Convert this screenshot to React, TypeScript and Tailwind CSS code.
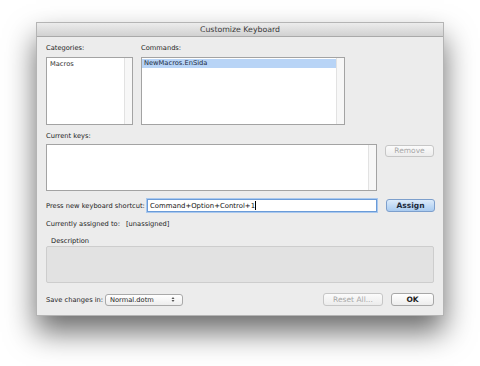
import React from "react";

const font = "font-['Lucida_Grande','DejaVu_Sans',sans-serif]";

function ListBox({className, children}: {className: string; children?: React.ReactNode}) {
    return (
        <div className={`relative flex bg-white border border-[#a3a3a3] ${className}`}>
            <div className="flex-1 pt-[1px]">{children}</div>
            <div className="w-[8px] bg-[#f7f7f7] border-l border-[#e2e2e2]"/>
        </div>
    );
}

function MacButton({label, disabled, primary, className}: {label: string; disabled?: boolean; primary?: boolean; className: string}) {
    const look = primary
        ? "border-[#7d9fcc] bg-gradient-to-b from-[#dcebfa] to-[#a9cbf0] text-[#1d2a3a] font-bold"
        : disabled
            ? "border-[#c6c6c6] bg-gradient-to-b from-[#fbfbfb] to-[#ececec] text-[#a8a8a8]"
            : "border-[#a7a7a7] bg-gradient-to-b from-[#ffffff] to-[#ededed] text-[#222]";
    return (
        <div className={`flex shrink-0 items-center justify-center whitespace-nowrap rounded-[3px] border text-[7.5px] leading-none ${look} ${className}`}>
            {label}
        </div>
    );
}

export default function App() {
    return (
        <div className={`w-[480px] h-[366px] bg-white pl-[36px] pt-[22px] ${font}`}>
            <div className="w-[408px] h-[294px] flex flex-col bg-[#ececec] border border-[#b4b4b4] shadow-[0_16px_28px_rgba(0,0,0,0.58)]">
                <div className="h-[14px] flex items-center justify-center bg-gradient-to-b from-[#ececec] to-[#d1d1d1] border-b border-[#a9a9a9] text-[7.8px] text-[#3a3a3a]">
                    Customize Keyboard
                </div>
                <div className="flex flex-col px-[9px] pt-[6px] text-[6.7px] leading-[10px] text-[#1c1c1c] whitespace-nowrap">
                    <div className="flex gap-[8px]">
                        <div className="flex flex-col w-[87px]">
                            <span>Categories:</span>
                            <ListBox className="mt-[4px] h-[68px]">
                                <div className="pl-[3px] text-[#333]">Macros</div>
                            </ListBox>
                        </div>
                        <div className="flex flex-col w-[204px]">
                            <span>Commands:</span>
                            <ListBox className="mt-[4px] h-[68px]">
                                <div className="h-[9px] bg-[#b8d4f6] pl-[2px] leading-[9px] text-[#1b2a40]">NewMacros.EnSida</div>
                            </ListBox>
                        </div>
                    </div>
                    <span className="mt-[6px]">Current keys:</span>
                    <div className="mt-[3px] flex gap-[8px]">
                        <ListBox className="w-[333px] h-[47px]"/>
                        <MacButton label="Remove" disabled className="w-[49px] h-[12px] mt-[1px]"/>
                    </div>
                    <div className="mt-[8px] flex items-center">
                        <span className="w-[101px] shrink-0">Press new keyboard shortcut:</span>
                        <div className="w-[230px] h-[13px] shrink-0 flex items-center bg-white border border-[#6a9bd8] shadow-[0_0_0_1px_#a9c8ee] pl-[2px] text-[6.9px] text-[#111]">
                            Command+Option+Control+1<span className="w-[1px] h-[9px] bg-black"/>
                        </div>
                        <MacButton label="Assign" primary className="ml-[9px] w-[49px] h-[13px]"/>
                    </div>
                    <div className="mt-[7px] flex">
                        <span className="w-[80px] shrink-0">Currently assigned to:</span>
                        <span>[unassigned]</span>
                    </div>
                    <span className="mt-[7px] pl-[5px]">Description</span>
                    <div className="h-[37px] bg-[#e2e2e2] border border-[#cdcdcd] rounded-[2px]"/>
                    <div className="mt-[10px] flex items-center">
                        <span className="w-[59px] shrink-0">Save changes in:</span>
                        <div className="w-[78px] h-[12px] shrink-0 flex items-center justify-between rounded-[3px] border border-[#a9a9a9] bg-gradient-to-b from-white to-[#ededed] pl-[4px] pr-[7px]">
                            <span>Normal.dotm</span>
                            <svg width="4" height="7" viewBox="0 0 4 7">
                                <path d="M0.5 3 L2 1 L3.5 3 Z M0.5 4 L2 6 L3.5 4 Z" fill="#555"/>
                            </svg>
                        </div>
                        <div className="flex-1"/>
                        <MacButton label="Reset All..." disabled className="w-[60px] h-[13px]"/>
                        <MacButton label="OK" className="ml-[8px] w-[43px] h-[13px] font-bold"/>
                    </div>
                </div>
            </div>
        </div>
    );
}
